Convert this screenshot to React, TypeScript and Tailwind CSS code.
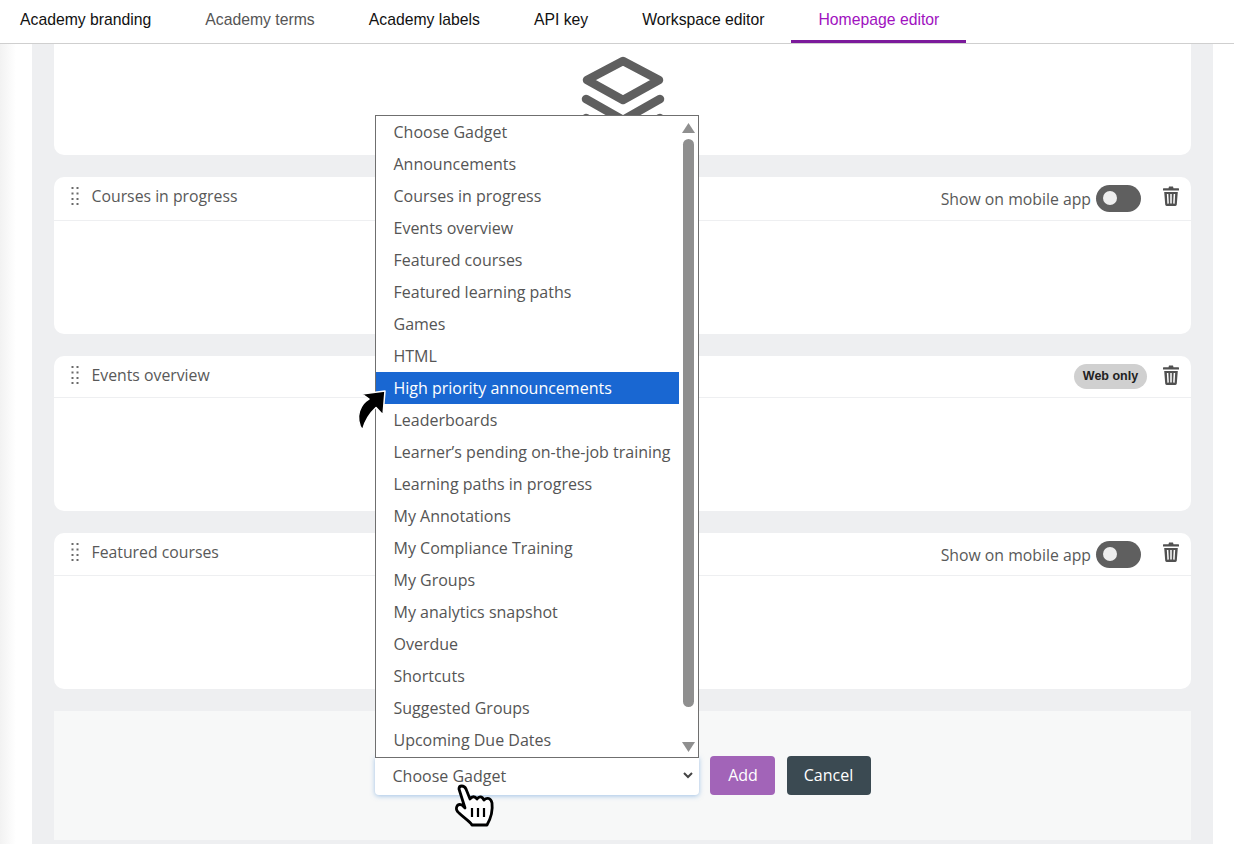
import React from "react";

const tabs = ["Academy branding", "Academy terms", "Academy labels", "API key", "Workspace editor", "Homepage editor"];
const options = [
  "Choose Gadget", "Announcements", "Courses in progress", "Events overview", "Featured courses",
  "Featured learning paths", "Games", "HTML", "High priority announcements", "Leaderboards",
  "Learner’s pending on-the-job training", "Learning paths in progress", "My Annotations",
  "My Compliance Training", "My Groups", "My analytics snapshot", "Overdue", "Shortcuts",
  "Suggested Groups", "Upcoming Due Dates",
];

function Drag() {
  return (
    <svg width="8" height="20" viewBox="0 0 8 20" fill="#6a6a6a" className="shrink-0">
      {[1, 6.5, 12, 17].map((y) => (
        <g key={y}>
          <rect x="0.5" y={y} width="2" height="2" />
          <rect x="5.5" y={y} width="2" height="2" />
        </g>
      ))}
    </svg>
  );
}

function Trash() {
  return (
    <svg width="16" height="20" viewBox="0 0 16 20" className="shrink-0">
      <path d="M5.5 2.2 L6 0.6 H10 L10.5 2.2 H15.4 Q16 2.2 16 2.8 V4.6 H0 V2.8 Q0 2.2 0.6 2.2 Z" fill="#505050" />
      <path d="M1.2 6 H14.8 L13.8 18.6 Q13.7 20 12.4 20 H3.6 Q2.3 20 2.2 18.6 Z" fill="#505050" />
      <path d="M4.6 8 L5.1 17.6 M8 8 V17.6 M11.4 8 L10.9 17.6" stroke="#fff" strokeWidth="1.5" />
    </svg>
  );
}

function Toggle() {
  return (
    <span className="flex h-[27px] w-[45px] items-center rounded-full bg-[#5f5f5f] pl-[7px]">
      <span className="h-[14px] w-[14px] rounded-full bg-[#eeeeee]" />
    </span>
  );
}

function Card({ title, height, head, web }: { title: string; height: string; head: string; web?: boolean }) {
  return (
    <section className={`${height} shrink-0 rounded-[10px] bg-white`}>
      <div className={`${head} flex items-center border-b border-[#eeeff1] pl-[17px] pr-[12px]`}>
        <Drag />
        <span className="ml-[12.5px] mt-[2px] text-[15.8px] text-[#595959]">{title}</span>
        <div className="ml-auto flex items-center">
          {web ? (
            <span className="mr-[16px] mt-[3px] flex h-[25px] w-[73px] items-center justify-center rounded-full bg-[#d0d0d0] font-['Liberation_Sans',sans-serif] text-[12.5px] font-bold text-[#222]">
              Web only
            </span>
          ) : (
            <span className="mr-[22px] mt-[5px] flex items-center gap-[5px]">
              <span className="mt-[4px] text-[15.8px] text-[#595959]">Show on mobile app</span>
              <Toggle />
            </span>
          )}
          <Trash />
        </div>
      </div>
    </section>
  );
}

function Dropdown() {
  return (
    <div className="absolute bottom-[37px] left-0 z-10 flex h-[643px] w-[324px] border border-[#6f6f6f] bg-white">
      <ul className="w-[303px] shrink-0">
        {options.map((o, i) => (
          <li
            key={o}
            className={`flex h-[32px] items-center whitespace-nowrap pl-[18px] ${
              i === 8 ? "bg-[#1967d2] text-white" : "text-[#555555]"
            }`}
          >
            {o}
          </li>
        ))}
      </ul>
      <div className="flex flex-1 flex-col items-center pl-[1px] pt-[7px]">
        <svg width="13" height="10" viewBox="0 0 13 10" fill="#8f8f8f"><path d="M6.5 0 L13 10 H0 Z" /></svg>
        <div className="mt-[6px] h-[568px] w-[11px] rounded-full bg-[#8f8f8f]" />
        <svg className="mt-auto mb-[5px]" width="13" height="10" viewBox="0 0 13 10" fill="#8f8f8f"><path d="M0 0 H13 L6.5 10 Z" /></svg>
      </div>
      <svg className="absolute left-[-19px] top-[273px]" width="32" height="44" viewBox="0 0 32 44">
        <path
          d="M5 5 L28 2 L26 26 L19 18.5 C13 24 8 31 5.5 41 C1.5 36 0.5 28 2.5 22 C4.5 16 8 12 12 10 Z"
          fill="#000"
          stroke="#fff"
          strokeWidth="1.5"
          strokeLinejoin="round"
        />
      </svg>
    </div>
  );
}

function Hand() {
  return (
    <svg className="absolute left-[65px] top-[18px] z-20" width="70" height="60" viewBox="0 0 70 60">
      <path
        d="M19 14 C19 10 24 10 26 14 L30 24 C32 21 35 21 37 24 C39 21 42 21 44 25 C47 22 51 23 52 28 C53 36 51 43 47 50 L32 50 C30 46 24 43 19 38 C14 34 17 28 22 30 L25 33 Z"
        fill="#fff"
        stroke="#000"
        strokeWidth="2.8"
        strokeLinejoin="round"
      />
      <path d="M32 33 V42 M38 33 V42 M44 33 V42" stroke="#000" strokeWidth="2.2" />
    </svg>
  );
}

export default function App() {
  return (
    <div className="flex h-[844px] w-[1234px] flex-col overflow-hidden bg-white font-['Open_Sans',sans-serif] text-[16px]">
      <header className="flex h-[44px] shrink-0 border-b border-[#cfcfcf] bg-white font-['Liberation_Sans',sans-serif]">
        <nav className="-ml-[7px] flex">
          {tabs.map((t, i) => (
            <span
              key={t}
              className={`flex h-[43px] items-center whitespace-nowrap border-b-[3px] px-[27px] text-[15.76px] ${
                i === 5
                  ? "border-[#7b1a9b] text-[#a012c0]"
                  : i === 1
                  ? "border-transparent text-[#555555]"
                  : "border-transparent text-[#111111]"
              }`}
            >
              {t}
            </span>
          ))}
        </nav>
      </header>
      <main className="flex min-h-0 flex-1 bg-[linear-gradient(to_right,#f2f2f2,#ffffff_16px)] pl-[32px] pr-[21px]">
        <div className="flex flex-1 flex-col gap-[22px] bg-[#eeeff1] px-[22px]">
          <section className="flex h-[111px] shrink-0 justify-center overflow-hidden rounded-b-[10px] bg-white pt-[12px]">
            <svg width="86" height="80" viewBox="0 0 86 80" className="shrink-0" fill="none" stroke="#5f5f5f" strokeWidth="8.5" strokeLinejoin="round" strokeLinecap="round">
              <path d="M43 5 L79 24 L43 44 L7 24 Z" />
              <path d="M6 43 L43 64 L80 43" />
              <path d="M6 62 L43 83 L80 62" />
            </svg>
          </section>
          <Card title="Courses in progress" height="h-[157px]" head="h-[44px] pb-[6px]" />
          <Card title="Events overview" height="h-[155px]" head="h-[42px] pb-[4px]" web />
          <Card title="Featured courses" height="h-[156px]" head="h-[43px] pb-[5px]" />
          <section className="flex h-[129px] shrink-0 items-center justify-center bg-[#f7f8f8]">
            <div className="relative mr-[11px] flex h-[38px] w-[324px] items-center justify-between rounded-b-[4px] bg-white pl-[18px] pr-[6px] text-[#555555] shadow-[0_1px_5px_rgba(90,150,215,0.55)]">
              <span>Choose Gadget</span>
              <svg width="10" height="7" viewBox="0 0 10 7" fill="none" stroke="#444" strokeWidth="2"><path d="M1 1 L5 5 L9 1" /></svg>
              <Dropdown />
              <Hand />
            </div>
            <button className="h-[39px] w-[65px] rounded-[4px] bg-[#a264b8] pb-[2px] pl-[2px] text-white">Add</button>
            <button className="ml-[12px] h-[39px] w-[84px] rounded-[4px] bg-[#3b4a52] pb-[2px] text-white">Cancel</button>
          </section>
        </div>
      </main>
    </div>
  );
}
